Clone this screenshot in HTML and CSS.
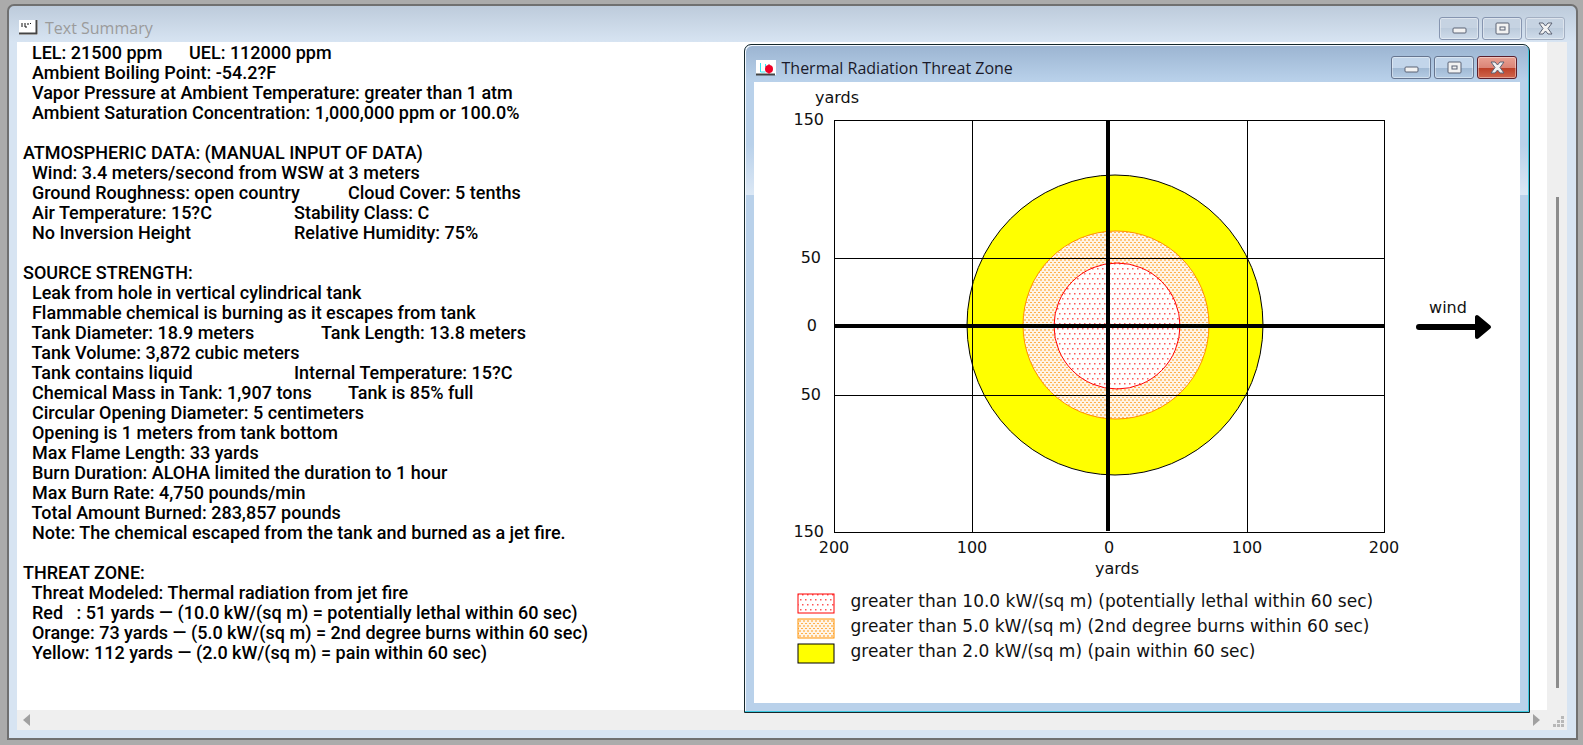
FILE: index.html
```html
<!DOCTYPE html>
<html lang="en">
<head>
    <meta charset="UTF-8">
    <meta name="viewport" content="width=device-width, initial-scale=1.0">
    <title>ALOHA - Text Summary</title>
    <link rel="stylesheet" href="styles.css">
</head>
<body>
    <div class="window summary">
        <header class="title-bar">
            <svg class="title-icon" width="20" height="16">
                <rect width="19" height="15" fill="#fff"/>
                <path d="M0 13.5h17.5V0" fill="none" stroke="#444" stroke-width="2"/>
                <path d="M3 3v4M6 3v4h2M9 3v2M11 3.500h1" fill="none" stroke="#111" stroke-width="1"/>
            </svg>
            <h1>Text Summary</h1>
            <div class="controls">
                <button aria-label="Minimize"><svg width="15" height="13"><rect x="1" y="6" width="13" height="5" rx="1"/></svg></button>
                <button aria-label="Maximize"><svg width="15" height="13"><rect x="1" y="1" width="13" height="11" rx="1"/><rect x="5" y="5" width="5" height="3"/></svg></button>
                <button class="close" aria-label="Close"><svg width="15" height="13"><path d="M1 1h4l2.500 3 2.500-3h4l-4 5.500 4 5.500h-4l-2.500-3-2.500 3h-4l4-5.500z"/></svg></button>
            </div>
        </header>

        <div class="scroll-area">
            <pre class="report">
<span class="col-xs">  LEL: 21500 ppm</span>UEL: 112000 ppm
  Ambient Boiling Point: -54.2?F
  Vapor Pressure at Ambient Temperature: greater than 1 atm
  Ambient Saturation Concentration: 1,000,000 ppm or 100.0%

ATMOSPHERIC DATA: (MANUAL INPUT OF DATA)
  Wind: 3.4 meters/second from WSW at 3 meters
<span class="col-lg">  Ground Roughness: open country</span>Cloud Cover: 5 tenths
<span class="col-sm">  Air Temperature: 15?C</span>Stability Class: C
<span class="col-sm">  No Inversion Height</span>Relative Humidity: 75%

SOURCE STRENGTH:
  Leak from hole in vertical cylindrical tank
  Flammable chemical is burning as it escapes from tank
<span class="col-md">  Tank Diameter: 18.9 meters</span>Tank Length: 13.8 meters
  Tank Volume: 3,872 cubic meters
<span class="col-sm">  Tank contains liquid</span>Internal Temperature: 15?C
<span class="col-lg">  Chemical Mass in Tank: 1,907 tons</span>Tank is 85% full
  Circular Opening Diameter: 5 centimeters
  Opening is 1 meters from tank bottom
  Max Flame Length: 33 yards
  Burn Duration: ALOHA limited the duration to 1 hour
  Max Burn Rate: 4,750 pounds/min
  Total Amount Burned: 283,857 pounds
  Note: The chemical escaped from the tank and burned as a jet fire.

THREAT ZONE:
  Threat Modeled: Thermal radiation from jet fire
  Red   : 51 yards — (10.0 kW/(sq m) = potentially lethal within 60 sec)
  Orange: 73 yards — (5.0 kW/(sq m) = 2nd degree burns within 60 sec)
  Yellow: 112 yards — (2.0 kW/(sq m) = pain within 60 sec)
</pre>
            <div class="scroll-v"><div class="thumb"></div></div>
            <div class="scroll-h">
                <svg width="8" height="12"><path d="M7 0v12L0 6z" fill="#a0a0a0"/></svg>
                <svg width="8" height="12"><path d="M1 0v12l7-6z" fill="#a0a0a0"/></svg>
            </div>
            <div class="grip">
                <svg width="12" height="12" fill="#b8b8b8"><path d="M8 0h3v3h-3zM8 4h3v3h-3zM8 8h3v3h-3zM4 4h3v3h-3zM4 8h3v3h-3zM0 8h3v3h-3z"/></svg>
            </div>
        </div>

        <div class="window threat">
            <header class="title-bar">
                <svg class="title-icon" width="20" height="16">
                    <rect width="20" height="15" fill="#fff"/>
                    <path d="M0 14.500h19" stroke="#444" stroke-width="2"/>
                    <path d="M4.500 3v9h5M9.500 4v3" fill="none" stroke="#2fe6f0"/>
                    <circle cx="13" cy="9" r="4" fill="#f00028"/>
                    <path d="M13 4v10" stroke="#f00028"/>
                </svg>
                <h2>Thermal Radiation Threat Zone</h2>
                <div class="controls">
                    <button aria-label="Minimize"><svg width="15" height="13"><rect x="1" y="6" width="13" height="5" rx="1"/></svg></button>
                    <button aria-label="Maximize"><svg width="15" height="13"><rect x="1" y="1" width="13" height="11" rx="1"/><rect x="5" y="5" width="5" height="3"/></svg></button>
                    <button class="close" aria-label="Close"><svg width="15" height="13"><path d="M1 1h4l2.500 3 2.500-3h4l-4 5.500 4 5.500h-4l-2.500-3-2.500 3h-4l4-5.500z"/></svg></button>
                </div>
            </header>

            <div class="threat-body">
                <svg class="chart" height="502">
                    <defs>
                        <pattern id="red-dots" width="5" height="10" patternUnits="userSpaceOnUse">
                            <rect width="5" height="10" fill="#fff"/>
                            <rect x="0" y="1" width="1.500" height="1.500" fill="#f55"/>
                            <rect x="3" y="6" width="1.500" height="1.500" fill="#f55"/>
                        </pattern>
                        <pattern id="orange-dots" width="4" height="5" patternUnits="userSpaceOnUse">
                            <rect width="4" height="5" fill="#fff4e6"/>
                            <rect x="0" y="0" width="2" height="1" fill="#ffb04a"/>
                            <rect x="2" y="2" width="2" height="2" fill="#ffc880"/>
                        </pattern>
                    </defs>

                    <!-- threat zones -->
                    <ellipse cx="361" cy="243" rx="148" ry="150" fill="#ff0" stroke="#000"/>
                    <ellipse cx="362" cy="243" rx="93" ry="94" fill="url(#orange-dots)" stroke="#ff9100"/>
                    <circle cx="363" cy="244" r="63" fill="url(#red-dots)" stroke="#f00"/>

                    <!-- grid -->
                    <g fill="none" stroke="#000" shape-rendering="crispEdges">
                        <rect x="80.500" y="38.500" width="550" height="412"/>
                        <path d="M218.500 39v412M493.500 39v412M81 176.500h550M81 313.500h550"/>
                        <path d="M354 38v411M81 244h549" stroke-width="4"/>
                    </g>

                    <g class="axis">
                        <text x="83" y="21" text-anchor="middle">yards</text>
                        <text x="70" y="43" text-anchor="end">150</text>
                        <text x="67" y="181" text-anchor="end">50</text>
                        <text x="63" y="249" text-anchor="end">0</text>
                        <text x="67" y="318" text-anchor="end">50</text>
                        <text x="70" y="455" text-anchor="end">150</text>
                        <text x="80" y="471" text-anchor="middle">200</text>
                        <text x="218" y="471" text-anchor="middle">100</text>
                        <text x="355" y="471" text-anchor="middle">0</text>
                        <text x="493" y="471" text-anchor="middle">100</text>
                        <text x="630" y="471" text-anchor="middle">200</text>
                        <text x="363" y="492" text-anchor="middle">yards</text>
                        <text x="694" y="231" text-anchor="middle">wind</text>
                    </g>

                    <path d="M665 245h60" stroke="#000" stroke-width="6" stroke-linecap="round"/>
                    <path d="M723 235v20l12-10z" stroke="#000" stroke-width="4" stroke-linejoin="round"/>
                </svg>

                <ul class="legend">
                    <li><svg width="38" height="21"><rect x="1" y="1" width="36" height="19" fill="url(#red-dots)" stroke="#f00"/></svg>greater than 10.0 kW/(sq m) (potentially lethal within 60 sec)</li>
                    <li><svg width="38" height="21"><rect x="1" y="1" width="36" height="19" fill="url(#orange-dots)" stroke="#ff9100"/></svg>greater than 5.0 kW/(sq m) (2nd degree burns within 60 sec)</li>
                    <li><svg width="38" height="21"><rect x="1" y="1" width="36" height="19" fill="#ff0" stroke="#000"/></svg>greater than 2.0 kW/(sq m) (pain within 60 sec)</li>
                </ul>
            </div>
        </div>
    </div>
</body>
</html>
```
FILE: styles.css
```css
* {
    box-sizing: border-box;
}

body {
    margin: 0;
    padding: 4px 5px 5px 7px;
    height: 100vh;
    background: #ababab;
    font-family: "Open Sans", "Noto Sans", sans-serif;
    overflow: hidden;
}

.window {
    display: flex;
    flex-direction: column;
    border-radius: 7px 7px 0 0;
}

.summary {
    position: relative;
    height: 100%;
    padding: 0 9px 8px 8px;
    border: 2px solid #707070;
    background: linear-gradient(#bdcbdb, #d7e4f2 36px);
}

.title-bar {
    display: flex;
    align-items: center;
    flex: none;
    height: 36px;
    padding: 8px 2px 0 2px;
}

.title-icon {
    flex: none;
    margin-right: 6px;
}

h1,
h2 {
    flex: 1;
    margin: 0;
    font-size: 16px;
    font-weight: 400;
    line-height: 20px;
    color: #9b9b9b;
}

h2 {
    color: #1a1a2a;
}

.controls {
    display: flex;
    gap: 3px;
}

.controls button {
    display: flex;
    align-items: center;
    justify-content: center;
    width: 40px;
    height: 23px;
    padding: 0;
    border: 1px solid #8695b0;
    border-radius: 3px;
    background: linear-gradient(#c6d3e2 50%, #bccbdc 50%, #cfdcea);
    box-shadow: inset 0 0 0 1px rgba(255, 255, 255, 0.4);
}

.controls .close {
    border-color: #a3afc2;
}

.controls svg {
    fill: #f2f2f2;
    stroke: #5a6275;
    stroke-width: 1px;
}

.scroll-area {
    flex: 1;
    display: grid;
    grid-template-columns: 1fr 20px;
    grid-template-rows: 1fr 20px;
    min-height: 0;
    background: #fff;
}

.report {
    margin: 0;
    padding: 1px 0 0 6px;
    overflow: hidden;
    font-family: Roboto, sans-serif;
    font-size: 18px;
    font-weight: 500;
    line-height: 20px;
    color: #000;
}

/* first part of a line that has two readings */
.report span {
    display: inline-block;
}

.col-xs {
    width: 166px;
}

.col-sm {
    width: 271px;
}

.col-md {
    width: 298px;
}

.col-lg {
    width: 325px;
}

.scroll-v,
.scroll-h,
.grip {
    background: #efefef;
}

.scroll-v {
    display: flex;
    justify-content: center;
    padding: 155px 0 22px;
}

.thumb {
    width: 3px;
    background: #8c8c8c;
}

.scroll-h {
    display: flex;
    align-items: center;
    justify-content: space-between;
    padding: 0 7px 0 6px;
}

.grip {
    display: flex;
    align-items: flex-end;
    justify-content: center;
    padding: 0 0 2px 4px;
}

.threat {
    position: absolute;
    top: 38px;
    right: 46px;
    bottom: 25px;
    width: calc(50% + 3px);
    padding: 0 9px 9px;
    border: 1px solid #16282c;
    background: linear-gradient(#9bb4d1, #b9d1ea 36px, #b9d1ea 100px, #dce8f5 150px, #b9d1ea 150px);
    box-shadow: inset -1px -1px 0 #3cc8e0, inset 1px 1px 0 #f4f9ff;
}

.threat .title-bar {
    height: 37px;
    padding-right: 3px;
}

.threat .controls button {
    border-color: #66758f;
    background: linear-gradient(#c2d5ea 50%, #9fb8d3 50%, #b5cce4);
}

.threat .controls .close {
    border-color: #5c1f2c;
    background: linear-gradient(#e9a193, #db8577 50%, #bb3d25 50%, #d0664d);
}

.threat-body {
    flex: 1;
    background: #fff;
}

.chart {
    display: block;
    width: 100%;
}

.axis,
.legend {
    font-family: "DejaVu Sans", sans-serif;
    font-size: 16px;
    fill: #111;
    color: #111;
}

.legend {
    margin: 0;
    padding: 9px 0 0 43px;
    list-style: none;
    font-size: 17px;
    line-height: 16px;
}

.legend li {
    display: flex;
    gap: 16px;
    height: 25px;
    white-space: nowrap;
}
```
